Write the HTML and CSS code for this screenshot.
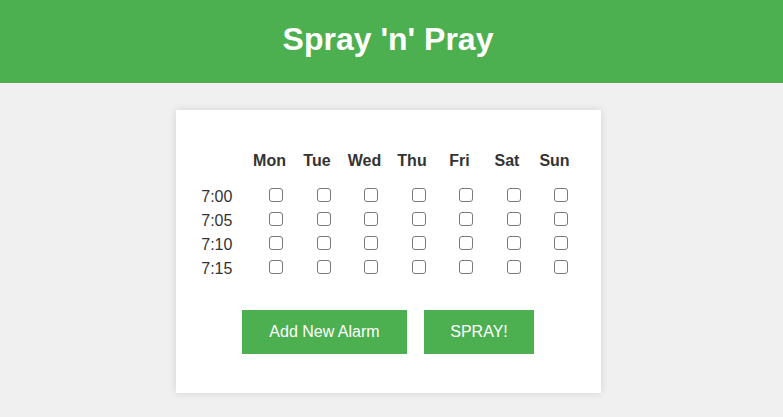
FILE: index.html
```html
<!DOCTYPE html>
<html>
<head>
<meta charset="utf-8">
<title>Spray 'n' Pray</title>
<link rel="stylesheet" href="styles.css">
</head>
<body>
<header class="topbar">
  <h1 class="title">Spray 'n' Pray</h1>
</header>
<div class="content">
<main class="card">
  <div class="schedule">
    <div class="corner"></div>
    <div class="day">Mon</div>
    <div class="day">Tue</div>
    <div class="day">Wed</div>
    <div class="day">Thu</div>
    <div class="day">Fri</div>
    <div class="day">Sat</div>
    <div class="day">Sun</div>

    <div class="time">7:00</div>
    <input class="check" type="checkbox"><input class="check" type="checkbox"><input class="check" type="checkbox"><input class="check" type="checkbox"><input class="check" type="checkbox"><input class="check" type="checkbox"><input class="check" type="checkbox">

    <div class="time">7:05</div>
    <input class="check" type="checkbox"><input class="check" type="checkbox"><input class="check" type="checkbox"><input class="check" type="checkbox"><input class="check" type="checkbox"><input class="check" type="checkbox"><input class="check" type="checkbox">

    <div class="time">7:10</div>
    <input class="check" type="checkbox"><input class="check" type="checkbox"><input class="check" type="checkbox"><input class="check" type="checkbox"><input class="check" type="checkbox"><input class="check" type="checkbox"><input class="check" type="checkbox">

    <div class="time">7:15</div>
    <input class="check" type="checkbox"><input class="check" type="checkbox"><input class="check" type="checkbox"><input class="check" type="checkbox"><input class="check" type="checkbox"><input class="check" type="checkbox"><input class="check" type="checkbox">
  </div>
  <div class="actions">
    <button class="btn btn-add" type="button">Add New Alarm</button>
    <button class="btn btn-spray" type="button">SPRAY!</button>
  </div>
</main>
</div>
</body>
</html>
```
FILE: styles.css
```css
html, body {
  margin: 0;
  padding: 0;
}
body {
  background: #f0f0f0;
  font-family: "Liberation Sans", Arial, sans-serif;
  color: #333;
  min-height: 417px;
}
.topbar {
  background: #4caf50;
  height: 83px;
  box-sizing: border-box;
  padding: 18px 7px 0 0;
  text-align: center;
}
.title {
  margin: 0;
  font-size: 32px;
  line-height: 43px;
  font-weight: bold;
  color: #fff;
}
.content {
  padding: 27px 6px 0 0;
}
.card {
  display: block;
  width: 425px;
  box-sizing: border-box;
  margin: 0 auto;
  padding: 39px 0 39px 3px;
  background: #fff;
  box-shadow: 0 0 8px rgba(0, 0, 0, 0.12);
}
.schedule {
  display: grid;
  grid-template-columns: 47px repeat(7, 47.5px);
  grid-template-rows: 36px repeat(4, 24px);
  justify-content: center;
}
.day {
  font-size: 16px;
  font-weight: bold;
  line-height: 24px;
  text-align: center;
  padding-right: 3px;
  color: #333;
}
.time {
  font-size: 16px;
  line-height: 24px;
  padding-left: 1px;
  color: #333;
}
.check {
  -webkit-appearance: none;
  appearance: none;
  box-sizing: border-box;
  width: 14px;
  height: 14px;
  margin: 3px 0 0 10.5px;
  border: 1px solid #7a7a7a;
  border-radius: 3px;
  background: #fff;
  align-self: start;
  justify-self: center;
}
.check:checked {
  background: #0075ff;
  border-color: #0075ff;
}
.actions {
  display: flex;
  justify-content: center;
  gap: 17px;
  margin: 29px 0 0 -4px;
}
.btn {
  height: 44px;
  border: none;
  background: #4caf50;
  color: #fff;
  font-family: "Liberation Sans", Arial, sans-serif;
  font-size: 16px;
  padding: 0;
  cursor: pointer;
}
.btn-add {
  width: 165px;
}
.btn-spray {
  width: 110px;
}
```
